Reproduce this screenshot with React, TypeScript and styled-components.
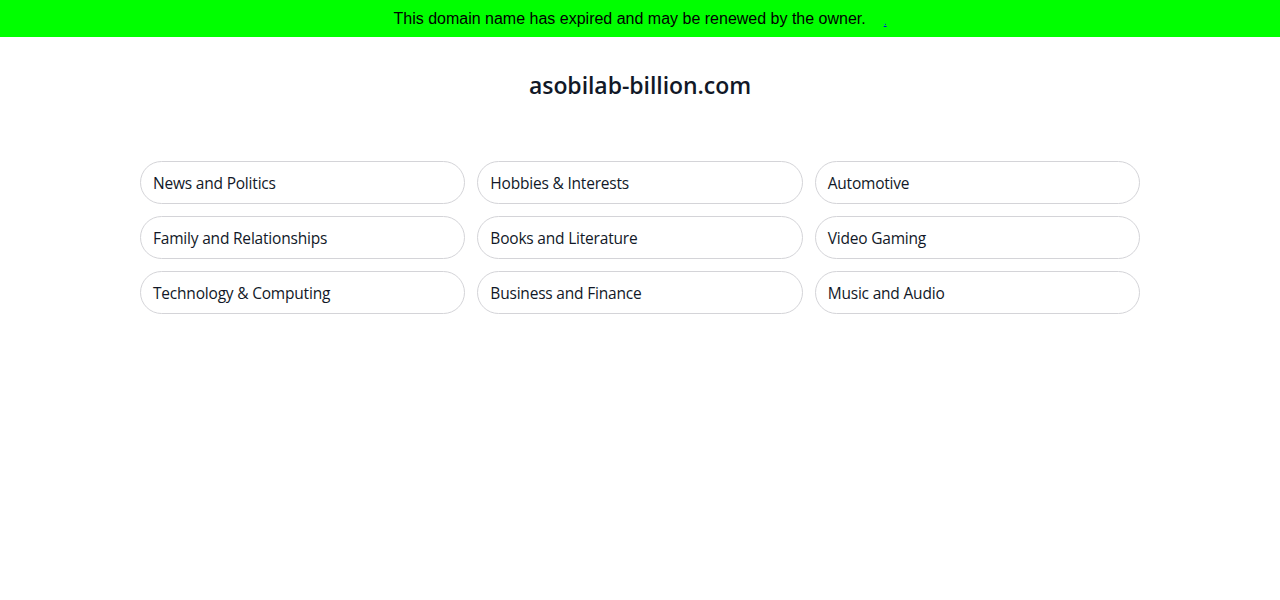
import styled, { createGlobalStyle } from 'styled-components';

const GlobalStyle = createGlobalStyle`
  html, body {
    margin: 0;
    padding: 0;
    background: #ffffff;
  }
`;

const categories = [
  'News and Politics',
  'Hobbies & Interests',
  'Automotive',
  'Family and Relationships',
  'Books and Literature',
  'Video Gaming',
  'Technology & Computing',
  'Business and Finance',
  'Music and Audio',
];

const Banner = styled.div`
  height: 37px;
  background: #00ff00;
  display: flex;
  align-items: center;
  justify-content: center;
  font-family: 'Liberation Sans', Arial, sans-serif;
  font-size: 16px;
  color: #000;
`;

const BannerLink = styled.a`
  margin-left: 18px;
  color: #0000ee;
  font-size: 10px;
  text-decoration: underline;
  align-self: center;
  padding-top: 6px;
`;

const Page = styled.main`
  font-family: 'Open Sans', 'Noto Sans', sans-serif;
  display: flex;
  flex-direction: column;
  align-items: center;
`;

const Title = styled.h1`
  margin: 33px 0 0;
  font-size: 23px;
  font-weight: 600;
  line-height: 30px;
  color: #111827;
  letter-spacing: -0.05px;
`;

const Grid = styled.div`
  margin-top: 61px;
  width: 1000px;
  display: grid;
  grid-template-columns: repeat(3, 1fr);
  gap: 12px;
`;

const Pill = styled.a`
  box-sizing: border-box;
  height: 43px;
  display: flex;
  align-items: center;
  padding: 0 12px;
  border: 1px solid #d4d4d8;
  border-radius: 22px;
  font-size: 15.5px;
  letter-spacing: -0.2px;
  color: #111827;
  text-decoration: none;
  background: #fff;
`;

export default function App() {
  return (
    <>
      <GlobalStyle />
      <Banner>
        This domain name has expired and may be renewed by the owner.
        <BannerLink href="#">.</BannerLink>
      </Banner>
      <Page>
        <Title>asobilab-billion.com</Title>
        <Grid>
          {categories.map((name) => (
            <Pill key={name} href="#">
              {name}
            </Pill>
          ))}
        </Grid>
      </Page>
    </>
  );
}
